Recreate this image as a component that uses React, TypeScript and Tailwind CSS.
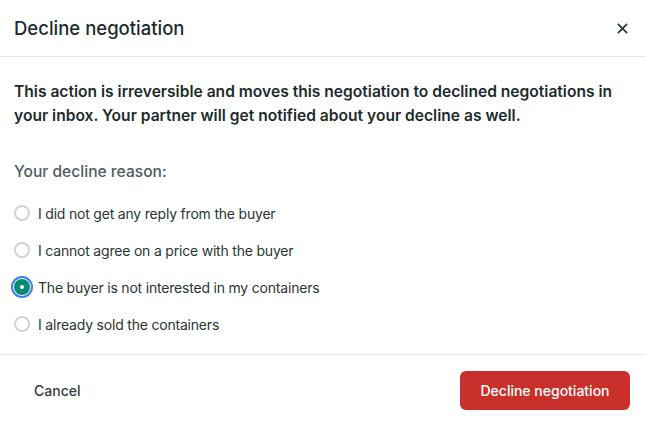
import { useState } from 'react';

const REASONS = [
  'I did not get any reply from the buyer',
  'I cannot agree on a price with the buyer',
  'The buyer is not interested in my containers',
  'I already sold the containers',
];

export default function App() {
  const [selected, setSelected] = useState(2);

  return (
    <div className="w-[646px] h-[422px] bg-white text-[#1d2b2b] font-['Inter',sans-serif] flex flex-col">
      <div className="h-[57px] flex items-center justify-between px-[14px] pt-[1px] border-b border-[#e3e9ec]">
        <h2 className="text-[18.5px] font-medium">Decline negotiation</h2>
        <button className="w-6 h-6 flex items-center justify-center mr-[-2px]" aria-label="Close">
          <svg width="11" height="11" viewBox="0 0 12 12" fill="none" stroke="#2a3838" strokeWidth="2" strokeLinecap="round">
            <path d="M1.5 1.5l9 9M10.5 1.5l-9 9" />
          </svg>
        </button>
      </div>

      <div className="flex-1 px-[14px] pt-[23px] border-b border-[#e3e9ec]">
        <p className="text-[15.6px] font-semibold leading-[24px]">
          This action is irreversible and moves this negotiation to declined negotiations in your inbox. Your partner will
          get notified about your decline as well.
        </p>
        <p className="mt-[32px] text-[15.6px] font-medium text-[#4e5d5d]">Your decline reason:</p>
        <div className="mt-[19px] flex flex-col gap-[15px]">
          {REASONS.map((r, i) => (
            <label key={r} className="flex items-center gap-[8px] h-[22px] cursor-pointer" onClick={() => setSelected(i)}>
              {selected === i ? (
                <span className="w-[16px] h-[16px] rounded-full bg-[#0d8a73] ring-2 ring-[#3b7cf0] ring-offset-1 flex items-center justify-center">
                  <span className="w-[4px] h-[4px] rounded-full bg-white" />
                </span>
              ) : (
                <span className="w-[16px] h-[16px] rounded-full border-2 border-[#ccd4d8] bg-white" />
              )}
              <span className="text-[14px] tracking-[-0.2px] text-[#2a3535]">{r}</span>
            </label>
          ))}
        </div>
      </div>

      <div className="h-[67px] flex items-center justify-between pl-[34px] pr-[16px] pt-[3px]">
        <button className="text-[14px] font-medium text-[#2f3d3d]">Cancel</button>
        <button className="h-[39px] w-[170px] rounded-[6px] bg-[#c9302c] text-white text-[14px] font-medium">
          Decline negotiation
        </button>
      </div>
    </div>
  );
}
